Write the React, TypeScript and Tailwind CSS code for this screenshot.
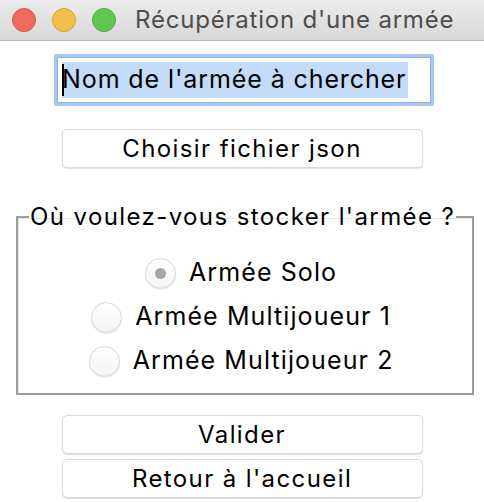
import React, { useState } from 'react';

const FONT = { fontFamily: 'Inter, "Liberation Sans", sans-serif' };

const MacButton: React.FC<{ label: string }> = ({ label }) => (
  <button className="w-[361px] h-[39px] bg-white border border-[#d9d9d9] rounded-[5px] shadow-[0_1px_1px_rgba(0,0,0,0.12)] text-[24px] tracking-[1.4px] text-black leading-none">
    {label}
  </button>
);

const Radio: React.FC<{ label: string; checked: boolean; onSelect: () => void }> = ({ label, checked, onSelect }) => (
  <div className="flex items-center gap-[13px] h-[44px]" onClick={onSelect}>
    <span className="w-[31px] h-[31px] rounded-full border border-[#d6d6d6] bg-gradient-to-b from-white to-[#f4f4f4] shadow-[0_1px_1px_rgba(0,0,0,0.08)] flex items-center justify-center">
      {checked && <span className="w-[11px] h-[11px] rounded-full bg-[#a6a6a6]" />}
    </span>
    <span className="text-[25px] tracking-[1.1px] text-black whitespace-nowrap">{label}</span>
  </div>
);

export default function App() {
  const [choice, setChoice] = useState('solo');

  return (
    <div className="w-[484px] h-[502px] bg-white overflow-hidden flex flex-col" style={FONT}>
      {/* barre de titre */}
      <div className="h-[41px] shrink-0 flex items-center bg-gradient-to-b from-[#ececec] to-[#d8d8d8] border-b border-[#bdbdbd]">
        <div className="flex gap-[16px] pl-[12px]">
          <span className="w-[24px] h-[24px] rounded-full bg-[#ee6a5f] border border-[#d5544a]" />
          <span className="w-[24px] h-[24px] rounded-full bg-[#f6be50] border border-[#d9a13a]" />
          <span className="w-[24px] h-[24px] rounded-full bg-[#62c655] border border-[#4ea842]" />
        </div>
        <span className="ml-[19px] text-[24px] tracking-[0.8px] text-[#4d4d4d] whitespace-nowrap">Récupération d'une armée</span>
      </div>

      {/* champ de recherche */}
      <div className="flex justify-center mt-[13px] pl-[4px]">
        <div className="w-[380px] h-[52px] border-[3px] border-[#a6c8f3] rounded-[2px] p-0">
          <div className="w-full h-full border border-[#9bb0cc] bg-white flex items-center pl-[4px]">
            <span className="relative bg-[#c4dcf8] text-[25px] tracking-[0.9px] text-black h-[36px] flex items-center pr-[2px] whitespace-nowrap">
              <span className="absolute left-0 top-[2px] w-[2px] h-[32px] bg-black" />
              Nom de l'armée à chercher
            </span>
          </div>
        </div>
      </div>

      <div className="flex justify-center mt-[23px]">
        <MacButton label="Choisir fichier json" />
      </div>

      {/* choix du stockage */}
      <fieldset className="ml-[16px] mr-[14px] mt-[37px] h-[190px] border-2 border-[#9c9c9c] shadow-[inset_1px_1px_0_#e6e6e6] pl-[8px] pr-[16px] pt-[2px]">
        <legend className="text-[24px] tracking-[1.4px] text-black leading-none px-[1px] ml-[3px] whitespace-nowrap">Où voulez-vous stocker l'armée ?</legend>
        <div className="flex flex-col items-center mt-[20px]">
          <Radio label="Armée Solo" checked={choice === 'solo'} onSelect={() => setChoice('solo')} />
          <Radio label="Armée Multijoueur 1" checked={choice === 'm1'} onSelect={() => setChoice('m1')} />
          <Radio label="Armée Multijoueur 2" checked={choice === 'm2'} onSelect={() => setChoice('m2')} />
        </div>
      </fieldset>

      <div className="flex flex-col items-center gap-[5px] mt-[20px]">
        <MacButton label="Valider" />
        <MacButton label="Retour à l'accueil" />
      </div>
    </div>
  );
}
